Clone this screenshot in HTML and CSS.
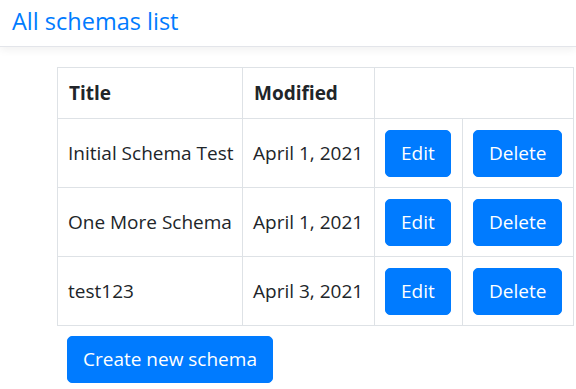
FILE: index.html
```html
<!DOCTYPE html>
<html lang="en">
<head>
  <meta charset="UTF-8" />
  <title>All schemas list</title>
  <link rel="stylesheet" href="styles.css">
</head>
<body>

  <header class="topbar">
    <a class="brand" href="#">All schemas list</a>
  </header>

  <main class="content">
    <table class="schemas">
      <colgroup>
        <col class="col-title">
        <col class="col-date">
        <col class="col-edit">
        <col class="col-delete">
      </colgroup>
      <thead>
        <tr>
          <th>Title</th>
          <th>Modified</th>
          <th colspan="2"></th>
        </tr>
      </thead>
      <tbody>
        <tr>
          <td>Initial Schema Test</td>
          <td>April 1, 2021</td>
          <td><button class="btn">Edit</button></td>
          <td><button class="btn">Delete</button></td>
        </tr>
        <tr>
          <td>One More Schema</td>
          <td>April 1, 2021</td>
          <td><button class="btn">Edit</button></td>
          <td><button class="btn">Delete</button></td>
        </tr>
        <tr>
          <td>test123</td>
          <td>April 3, 2021</td>
          <td><button class="btn">Edit</button></td>
          <td><button class="btn">Delete</button></td>
        </tr>
      </tbody>
    </table>

    <button class="btn btn-create">Create new schema</button>
  </main>

</body>
</html>
```

FILE: styles.css
```css
* {
  box-sizing: border-box;
  margin: 0;
  padding: 0;
}

body {
  font-family: 'Open Sans', 'Noto Sans', sans-serif;
  font-size: 19px;
  color: #212529;
  background: #fff;
}

/* Top bar */
.topbar {
  height: 47px;
  padding: 0 12px;
  display: flex;
  align-items: center;
  border-bottom: 1px solid #e3e5ea;
  box-shadow: 0 3px 8px rgba(0, 0, 0, 0.06);
}

.brand {
  color: #007bff;
  font-size: 23.5px;
  text-decoration: none;
  margin-top: -4px;
}

/* Table */
.content {
  padding: 20px 0 0 57px;
}

.schemas {
  border-collapse: collapse;
  table-layout: fixed;
  width: 516px;
}

.col-title { width: 185px; }
.col-date { width: 132px; }
.col-edit { width: 88px; }
.col-delete { width: 111px; }

.schemas th,
.schemas td {
  border: 1px solid #dee2e6;
  text-align: left;
  vertical-align: middle;
  white-space: nowrap;
}

.schemas th {
  font-weight: 700;
  padding: 10px 11px;
  line-height: 30px;
}

.schemas td {
  padding: 11px 10px 10px;
  line-height: 29px;
}

/* Buttons */
.btn {
  font-family: inherit;
  font-size: 19px;
  line-height: 29px;
  color: #fff;
  background: #007bff;
  border: 1px solid #007bff;
  border-radius: 5px;
  padding: 8px 15px;
  cursor: pointer;
}

.btn-create {
  margin: 10px 0 0 10px;
}
```
